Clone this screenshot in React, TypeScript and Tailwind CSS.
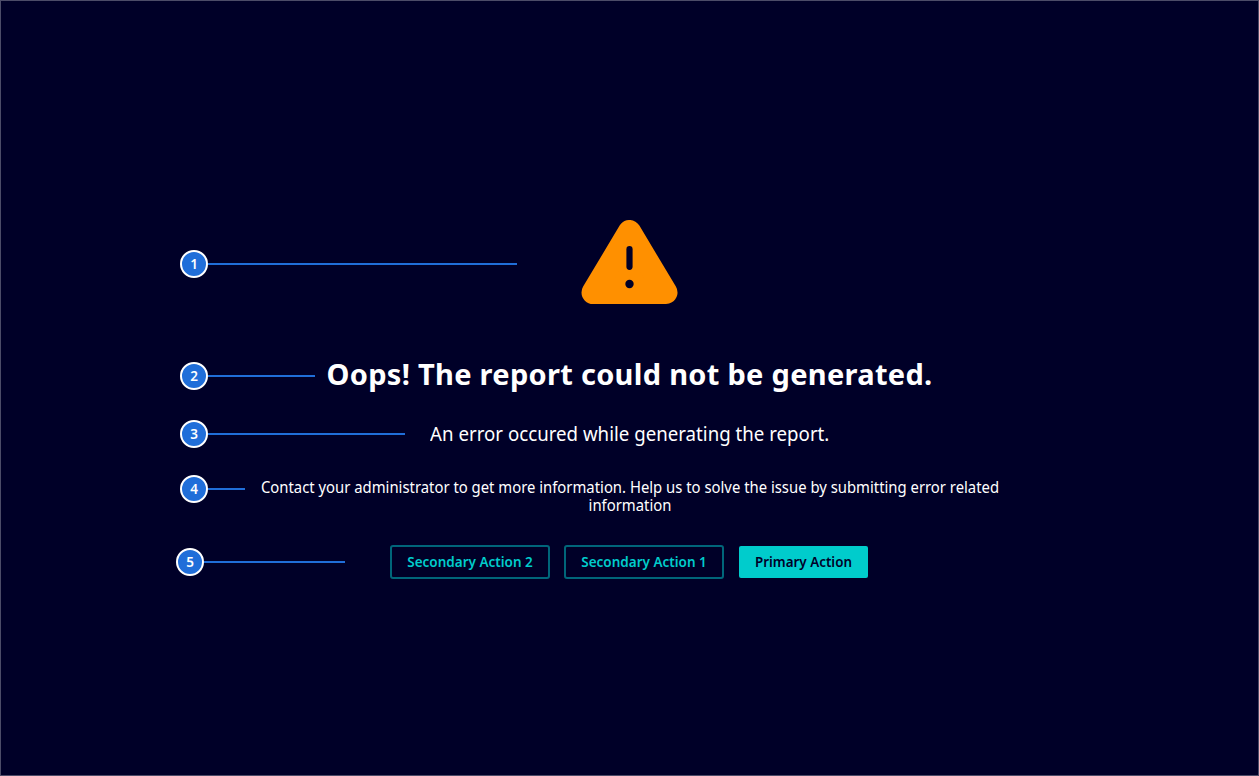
import type { ReactNode } from 'react';

function Marker({ n, line, className }: { n: number; line: string; className: string }) {
  return (
    <div className={`col-start-1 row-start-1 flex h-7 items-center justify-self-start ${className}`}>
      <span className="flex size-7 items-center justify-center rounded-full border-2 border-white bg-[#206ed9] pt-px text-[13.5px] leading-none font-semibold text-white">
        {n}
      </span>
      <span className={`h-0.5 bg-[#206ed9] ${line}`} />
    </div>
  );
}

function Row({ marker, className, children }: { marker: ReactNode; className: string; children: ReactNode }) {
  return (
    <div className={`grid items-start ${className}`}>
      {marker}
      <div className="col-start-1 row-start-1 flex justify-center pr-px">{children}</div>
    </div>
  );
}

function WarningIcon() {
  return (
    <svg width="97" height="84" viewBox="0 0 97 84" aria-hidden="true">
      <path d="M48.5 11.5 85 72.5H12Z" fill="#ff9000" stroke="#ff9000" strokeWidth="23" strokeLinejoin="round" />
      <path d="M48.5 29.2V46.8" stroke="#000028" strokeWidth="6.2" strokeLinecap="round" />
      <circle cx="48.5" cy="64" r="4.2" fill="#000028" />
    </svg>
  );
}

function SecondaryButton({ children }: { children: ReactNode }) {
  return (
    <button className="flex h-[34px] w-40 items-center justify-center rounded-[3px] border-2 border-[#00667a] text-[13.5px] font-semibold text-[#00cccc]">
      {children}
    </button>
  );
}

export default function App() {
  return (
    <main className="h-[776px] w-[1259px] border border-[#4c4c68] bg-[#000028] pt-[219px] font-['Noto_Sans',sans-serif] text-white">
      <Row className="h-[84px]" marker={<Marker n={1} line="w-[309px]" className="mt-[30px] ml-[179px]" />}>
        <WarningIcon />
      </Row>

      <Row className="mt-[52px] h-9" marker={<Marker n={2} line="w-[107px]" className="mt-1.5 ml-[179px]" />}>
        <h1 className="ml-px text-[29px] leading-9 font-bold tracking-[0.3px] whitespace-nowrap">
          Oops! The report could not be generated.
        </h1>
      </Row>

      <Row className="mt-[27px] h-7" marker={<Marker n={3} line="w-[197px]" className="mt-px ml-[179px]" />}>
        <h2 className="ml-px scale-x-[0.934] pt-px text-[20px] leading-7 whitespace-nowrap">
          An error occured while generating the report.
        </h2>
      </Row>

      <Row className="mt-7 h-10" marker={<Marker n={4} line="w-[37px]" className="ml-[179px]" />}>
        <p className="mt-[3px] ml-px w-[810px] shrink-0 scale-x-[0.928] text-center text-[16px] leading-[18px]">
          Contact your administrator to get more information. Help us to solve the issue by submitting error related
          information
        </p>
      </Row>

      <Row className="mt-[30px] h-[34px]" marker={<Marker n={5} line="w-[141px]" className="mt-[3px] ml-[175px]" />}>
        <div className="flex items-center">
          <SecondaryButton>Secondary Action 2</SecondaryButton>
          <div className="ml-3.5">
            <SecondaryButton>Secondary Action 1</SecondaryButton>
          </div>
          <button className="ml-[15px] h-8 w-[129px] rounded-[2px] bg-[#00cccc] text-[13.4px] font-semibold text-[#000028]">
            Primary Action
          </button>
        </div>
      </Row>
    </main>
  );
}
